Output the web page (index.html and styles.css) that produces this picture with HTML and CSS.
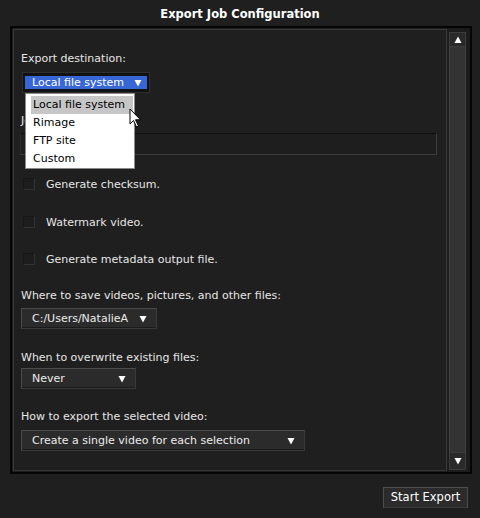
FILE: index.html
```html
<!DOCTYPE html>
<html>
<head>
<meta charset="utf-8">
<link rel="stylesheet" href="styles.css">
</head>
<body>
<div class="title">Export Job Configuration</div>
<div class="frame">
  <div class="panel">
    <div class="label first">Export destination:</div>
    <div class="select focused">
      <span class="hl"><span class="txt">Local file system</span>
        <svg class="arrow" width="8" height="8" viewBox="0 0 8 8"><polygon points="0.5,1 7.5,1 4,7.5" fill="#fff"/></svg>
      </span>
      <div class="menu">
        <div class="item active">Local file system</div>
        <div class="item">Rimage</div>
        <div class="item">FTP site</div>
        <div class="item">Custom</div>
      </div>
      <svg class="cursor" width="14" height="21" viewBox="0 0 14 21"><path d="M1 1 L1 16 L4.5 12.5 L7.5 19 L9.5 18 L6.5 11.8 L11.5 11.8 Z" fill="#fff" stroke="#000" stroke-width="1"/></svg>
    </div>
    <div class="label job">Job name:</div>
    <div class="input"></div>
    <div class="check c1"><span class="box"></span><span>Generate checksum.</span></div>
    <div class="check c2"><span class="box"></span><span>Watermark video.</span></div>
    <div class="check c3"><span class="box"></span><span>Generate metadata output file.</span></div>
    <div class="label l-where">Where to save videos, pictures, and other files:</div>
    <div class="select plain w-path"><span class="txt">C:/Users/NatalieA</span>
      <svg class="arrow" width="8" height="8" viewBox="0 0 8 8"><polygon points="0.5,1 7.5,1 4,7.5" fill="#fff"/></svg>
    </div>
    <div class="label l-when">When to overwrite existing files:</div>
    <div class="select plain w-never"><span class="txt">Never</span>
      <svg class="arrow" width="8" height="8" viewBox="0 0 8 8"><polygon points="0.5,1 7.5,1 4,7.5" fill="#fff"/></svg>
    </div>
    <div class="label l-how">How to export the selected video:</div>
    <div class="select plain w-how"><span class="txt">Create a single video for each selection</span>
      <svg class="arrow" width="8" height="8" viewBox="0 0 8 8"><polygon points="0.5,1 7.5,1 4,7.5" fill="#fff"/></svg>
    </div>
  </div>
  <div class="scroll">
    <div class="sbtn"><svg width="8" height="8" viewBox="0 0 8 8"><polygon points="4,0.5 7.5,7 0.5,7" fill="#fff"/></svg></div>
    <div class="track"></div>
    <div class="sbtn down"><svg width="8" height="8" viewBox="0 0 8 8"><polygon points="0.5,1 7.5,1 4,7.5" fill="#fff"/></svg></div>
  </div>
</div>
<div class="footer"><div class="button">Start Export</div></div>
</body>
</html>
```
FILE: styles.css
```css
html, body {
  margin: 0;
  padding: 0;
  background: #1f1f1f;
  width: 480px;
  height: 518px;
  overflow: hidden;
  font-family: "DejaVu Sans", Verdana, sans-serif;
  font-size: 11px;
  color: #e6e6e6;
}
.title {
  height: 26px;
  line-height: 28px;
  text-align: center;
  font-weight: bold;
  font-size: 11.5px;
  color: #ffffff;
}
.frame {
  margin-left: 10px;
  width: 462px;
  height: 448px;
  box-sizing: border-box;
  border: 2px solid #050505;
  padding: 1px;
  display: flex;
  background: #1c1c1c;
}
.panel {
  width: 434px;
  box-sizing: border-box;
  border: 1px solid #3a3a3a;
  border-bottom-color: #353535;
  background: #1f1f1f;
  padding: 0 0 0 7px;
  display: flex;
  flex-direction: column;
  align-items: flex-start;
}
.label {
  line-height: 14px;
  height: 14px;
}
.label.first { margin-top: 22px; }
.label.job { margin-top: 21px; }
.label.l-where { margin-top: 23px; }
.label.l-when { margin-top: 22px; }
.label.l-how { margin-top: 21px; }
.select {
  position: relative;
  box-sizing: border-box;
  display: flex;
  align-items: center;
  margin-top: 6px;
}
.select .txt { white-space: nowrap; }
.select.focused {
  margin-left: 1px;
  width: 128px;
  height: 21px;
  background: #121212;
  border: 1px solid #2e2e2e;
  padding: 0 2px;
}
.select.focused .hl {
  flex: 1;
  height: 13px;
  background: #3767d6;
  display: flex;
  align-items: center;
  justify-content: space-between;
  padding: 0 5px 0 7px;
  color: #fff;
  line-height: 13px;
}
.select.plain {
  height: 21px;
  background: #2b2b2b;
  border: 1px solid #4a4a4a;
  border-right-color: #3a3a3a;
  border-bottom-color: #3a3a3a;
  box-shadow: inset 0 -1px 0 #1a1a1a;
  padding: 0 9px 0 10px;
  justify-content: space-between;
  color: #ececec;
}
.select.plain.w-path { width: 136px; margin-top: 5px; }
.select.plain.w-never { width: 115px; margin-top: 3px; }
.select.plain.w-how { width: 284px; margin-top: 6px; }
.arrow { display: block; }
.menu {
  position: absolute;
  left: 2px;
  top: 20px;
  width: 110px;
  height: 76px;
  box-sizing: border-box;
  background: #fff;
  border: 1px solid #8a8a8a;
  padding: 2px 1px 0 5px;
  color: #000;
  z-index: 2;
}
.item {
  height: 18px;
  line-height: 18px;
  padding-left: 2px;
  white-space: nowrap;
}
.item.active { background: #c6c6c6; }
.cursor {
  position: absolute;
  left: 106px;
  top: 35px;
  z-index: 3;
}
.input {
  margin-top: 5px;
  margin-left: -1px;
  width: 417px;
  height: 22px;
  box-sizing: border-box;
  border: 1px solid #3c3c3c;
  border-top-color: #0f0f0f;
  border-left-color: #2a2a2a;
  background: #1e1e1e;
}
.check {
  display: flex;
  align-items: center;
  height: 14px;
}
.check.c1 { margin-top: 22px; }
.check.c2 { margin-top: 24px; }
.check.c3 { margin-top: 23px; }
.check .box {
  width: 12px;
  height: 12px;
  box-sizing: border-box;
  margin-left: 2px;
  margin-right: 11px;
  border: 1px solid #333333;
  border-top-color: #161616;
  border-left-color: #161616;
  background: #1d1d1d;
}
.scroll {
  width: 17px;
  margin-left: 2px;
  display: flex;
  flex-direction: column;
}
.sbtn {
  height: 15px;
  margin-top: 3px;
  box-sizing: border-box;
  background: #2a2a2a;
  border: 1px solid #3c3c3c;
  display: flex;
  align-items: center;
  justify-content: center;
}
.sbtn.down { margin-top: 0; height: 18px; margin-bottom: 1px; }
.track {
  flex: 1;
  background: #333333;
  border-left: 1px solid #444;
  border-right: 1px solid #3e3e3e;
}
.footer {
  display: flex;
  justify-content: flex-end;
  padding-right: 12px;
  margin-top: 13px;
}
.button {
  width: 85px;
  height: 21px;
  box-sizing: border-box;
  background: #2b2b2b;
  border: 1px solid #4e4e4e;
  border-bottom-color: #3a3a3a;
  color: #fff;
  text-align: center;
  line-height: 19px;
  font-size: 11.5px;
}
```
